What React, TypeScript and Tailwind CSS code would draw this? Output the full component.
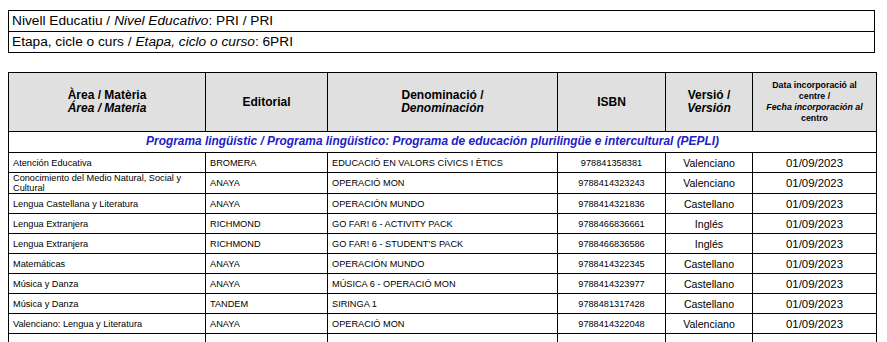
const rows = [
  { area: 'Atención Educativa', ed: 'BROMERA', den: 'EDUCACIÓ EN VALORS CÍVICS I ÈTICS', isbn: '978841358381', ver: 'Valenciano' },
  { area: 'Conocimiento del Medio Natural, Social y Cultural', ed: 'ANAYA', den: 'OPERACIÓ MON', isbn: '9788414323243', ver: 'Valenciano' },
  { area: 'Lengua Castellana y Literatura', ed: 'ANAYA', den: 'OPERACIÓN MUNDO', isbn: '9788414321836', ver: 'Castellano' },
  { area: 'Lengua Extranjera', ed: 'RICHMOND', den: 'GO FAR! 6 - ACTIVITY PACK', isbn: '9788466836661', ver: 'Inglés' },
  { area: 'Lengua Extranjera', ed: 'RICHMOND', den: "GO FAR! 6 - STUDENT'S PACK", isbn: '9788466836586', ver: 'Inglés' },
  { area: 'Matemáticas', ed: 'ANAYA', den: 'OPERACIÓN MUNDO', isbn: '9788414322345', ver: 'Castellano' },
  { area: 'Música y Danza', ed: 'ANAYA', den: 'MÚSICA 6 - OPERACIÓ MON', isbn: '9788414323977', ver: 'Castellano' },
  { area: 'Música y Danza', ed: 'TANDEM', den: 'SIRINGA 1', isbn: '9788481317428', ver: 'Castellano' },
  { area: 'Valenciano: Lengua y Literatura', ed: 'ANAYA', den: 'OPERACIÓ MON', isbn: '9788414322048', ver: 'Valenciano' },
];

const td = 'border border-black px-[4px] h-[20px] leading-[10px] align-middle';

export default function App() {
  return (
    <div className="min-h-screen bg-white text-black pt-[10px] px-[8px]" style={{ fontFamily: '"Liberation Sans", Arial, sans-serif' }}>
      <div className="w-[867px] border border-black text-[13.7px] leading-none">
        <div className="h-[21px] flex items-center px-[3px] border-b border-black">
          Nivell Educatiu / <i className="ml-[4px]">Nivel Educativo</i>: PRI / PRI
        </div>
        <div className="h-[20px] flex items-center px-[3px]">
          Etapa, cicle o curs / <i className="ml-[4px]">Etapa, ciclo o curso</i>: 6PRI
        </div>
      </div>

      <table className="mt-[19px] w-[868px] border-collapse table-fixed">
        <colgroup>
          <col className="w-[197px]" />
          <col className="w-[122px]" />
          <col className="w-[230px]" />
          <col className="w-[108px]" />
          <col className="w-[87px]" />
          <col className="w-[124px]" />
        </colgroup>
        <thead>
          <tr className="bg-[#e0e0e0] font-bold text-[12px] leading-[13px] text-center">
            <th className="border border-black h-[59px]">
              Àrea / Matèria<br /><i>Área / Materia</i>
            </th>
            <th className="border border-black">Editorial</th>
            <th className="border border-black">
              Denominació /<br /><i>Denominación</i>
            </th>
            <th className="border border-black">ISBN</th>
            <th className="border border-black">
              Versió /<br /><i>Versión</i>
            </th>
            <th className="border border-black text-[8.8px] leading-[11px] px-[2px]">
              Data incorporació al<br />centre /<br /><i>Fecha incorporación al</i><br />centro
            </th>
          </tr>
        </thead>
        <tbody>
          <tr>
            <td colSpan={6} className="border border-black h-[21px] pr-[20px] text-center font-bold italic text-[11.9px] text-[#2020c8]">
              Programa lingüístic / Programa lingüístico: Programa de educación plurilingüe e intercultural (PEPLI)
            </td>
          </tr>
          {rows.map((r, i) => (
            <tr key={i} className="text-[9.2px]">
              <td className={td}>{r.area}</td>
              <td className={td}>{r.ed}</td>
              <td className={td}>{r.den}</td>
              <td className={td + ' text-center'}>{r.isbn}</td>
              <td className={td + ' text-center text-[10.6px]'}>{r.ver}</td>
              <td className={td + ' text-center text-[11.4px]'}>01/09/2023</td>
            </tr>
          ))}
          <tr>
            <td className={td}></td>
            <td className={td}></td>
            <td className={td}></td>
            <td className={td}></td>
            <td className={td}></td>
            <td className={td}></td>
          </tr>
        </tbody>
      </table>
    </div>
  );
}
